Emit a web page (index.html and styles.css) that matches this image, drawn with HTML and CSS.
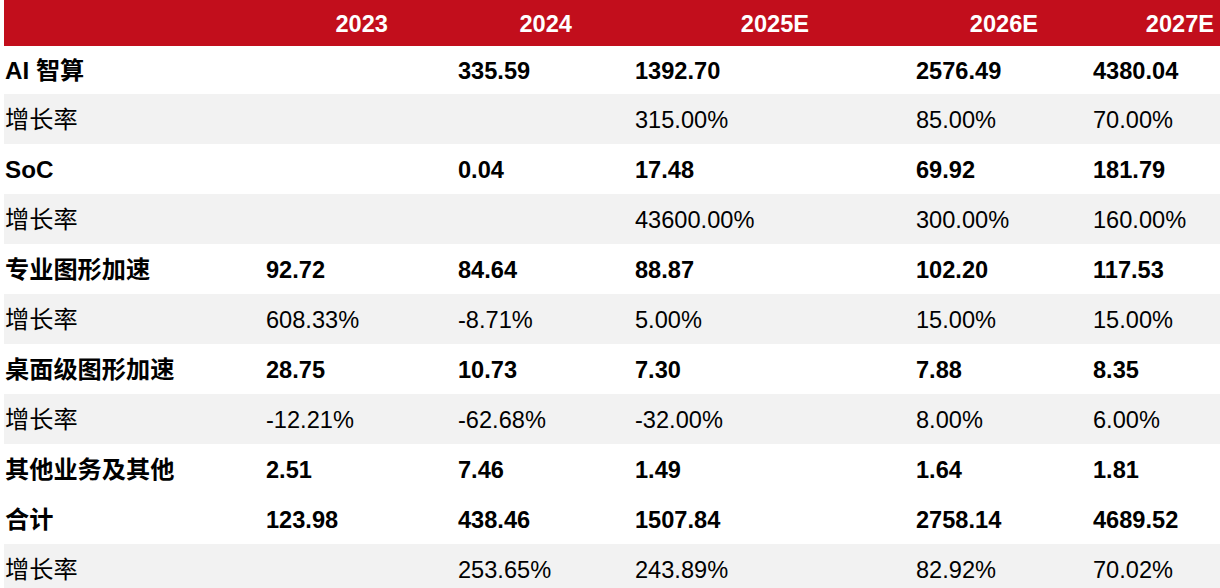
FILE: index.html
```html
<!DOCTYPE html>
<html lang="zh">
<head>
<meta charset="utf-8">
<link rel="stylesheet" href="styles.css">
</head>
<body>
<div class="table">
  <div class="head">
    <div class="hc">2023</div>
    <div class="hc">2024</div>
    <div class="hc">2025E</div>
    <div class="hc">2026E</div>
    <div class="hc">2027E</div>
  </div>
  <div class="row bold first"><div class="lab">AI 智算</div><div></div><div>335.59</div><div>1392.70</div><div>2576.49</div><div>4380.04</div></div>
  <div class="row gray"><div class="lab">增长率</div><div></div><div></div><div>315.00%</div><div>85.00%</div><div>70.00%</div></div>
  <div class="row bold"><div class="lab">SoC</div><div></div><div>0.04</div><div>17.48</div><div>69.92</div><div>181.79</div></div>
  <div class="row gray"><div class="lab">增长率</div><div></div><div></div><div>43600.00%</div><div>300.00%</div><div>160.00%</div></div>
  <div class="row bold"><div class="lab">专业图形加速</div><div>92.72</div><div>84.64</div><div>88.87</div><div>102.20</div><div>117.53</div></div>
  <div class="row gray"><div class="lab">增长率</div><div>608.33%</div><div>-8.71%</div><div>5.00%</div><div>15.00%</div><div>15.00%</div></div>
  <div class="row bold"><div class="lab">桌面级图形加速</div><div>28.75</div><div>10.73</div><div>7.30</div><div>7.88</div><div>8.35</div></div>
  <div class="row gray"><div class="lab">增长率</div><div>-12.21%</div><div>-62.68%</div><div>-32.00%</div><div>8.00%</div><div>6.00%</div></div>
  <div class="row bold"><div class="lab">其他业务及其他</div><div>2.51</div><div>7.46</div><div>1.49</div><div>1.64</div><div>1.81</div></div>
  <div class="row bold"><div class="lab">合计</div><div>123.98</div><div>438.46</div><div>1507.84</div><div>2758.14</div><div>4689.52</div></div>
  <div class="row gray"><div class="lab">增长率</div><div></div><div>253.65%</div><div>243.89%</div><div>82.92%</div><div>70.02%</div></div>
</div>
</body>
</html>
```

FILE: styles.css
```css
html, body {
  margin: 0;
  padding: 0;
  background: #ffffff;
}
body {
  font-family: "Liberation Sans", Arial, "Noto Sans CJK SC", sans-serif;
  font-size: 23.6px;
  color: #000000;
  overflow: hidden;
}
.table {
  margin-left: 4px;
  width: 1216px;
}
.head {
  display: grid;
  grid-template-columns: 384px 184px 237px 229px 176px;
  height: 46px;
  align-items: center;
  background: #c20e1c;
  color: #ffffff;
  font-weight: bold;
}
.hc {
  text-align: right;
  line-height: 46px;
  padding-top: 1px;
}
.row {
  display: grid;
  grid-template-columns: 258px 192px 177px 281px 177px 131px;
  height: 50px;
  align-items: start;
  line-height: 52px;
}
.row.first {
  height: 48px;
  line-height: 50px;
}
.row > div {
  padding-left: 4px;
  white-space: nowrap;
}
.row > .lab {
  padding-left: 1px;
  font-size: 24.2px;
}
.bold {
  font-weight: bold;
}
.gray {
  background: #f2f2f2;
}
```
